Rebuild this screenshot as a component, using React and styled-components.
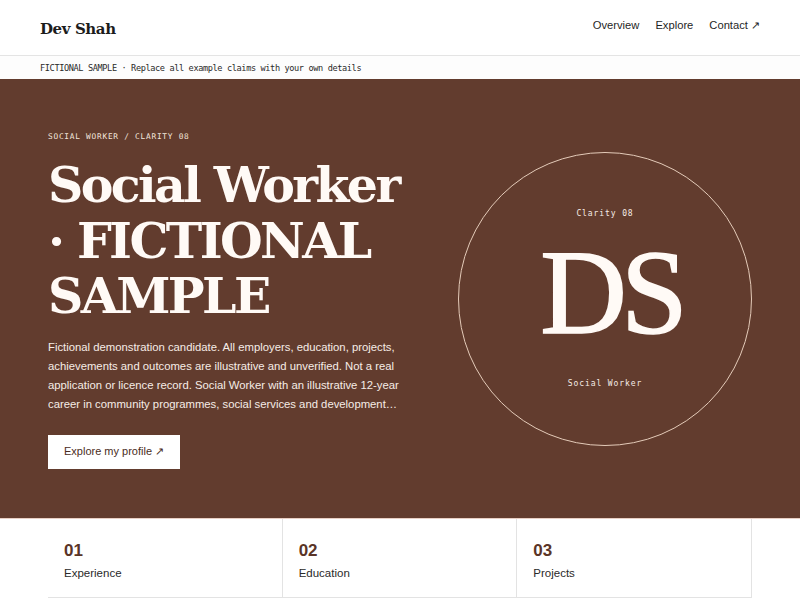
import React from 'react'
import styled, { createGlobalStyle } from 'styled-components'

const Global = createGlobalStyle`
  * { box-sizing: border-box; }
  body {
    margin: 0;
    background: #ffffff;
    font-family: "Liberation Sans", Arial, sans-serif;
    color: #1f1f1f;
  }
`

const Header = styled.header`
  height: 56px;
  display: flex;
  align-items: center;
  justify-content: space-between;
  padding: 0 40px;
  border-bottom: 1px solid #e4e4e4;
`

const Logo = styled.div`
  font-family: "DejaVu Serif", Georgia, serif;
  font-weight: 700;
  font-size: 15px;
  letter-spacing: -0.4px;
  color: #1c1c1c;
  margin-top: 2px;
`

const Nav = styled.nav`
  display: flex;
  gap: 16px;
  margin-top: -4px;
  a {
    font-size: 11.2px;
    color: #1f1f1f;
    text-decoration: none;
  }
`

const Strip = styled.div`
  height: 23px;
  display: flex;
  align-items: center;
  padding: 0 40px;
  font-family: "DejaVu Sans Mono", "Liberation Mono", monospace;
  font-size: 8.6px;
  letter-spacing: -0.38px;
  color: #2a2a2a;
  background: #fdfdfd;
`

const Hero = styled.section`
  background: #623c2e;
  height: 440px;
  display: grid;
  grid-template-columns: 1fr 294px;
  align-items: center;
  gap: 40px;
  padding: 0 48px;
  border-bottom: 1px solid #e9cfc4;
`

const Intro = styled.div`
  display: flex;
  flex-direction: column;
  align-items: flex-start;
  padding-top: 4px;
`

const Eyebrow = styled.div`
  font-family: "DejaVu Sans Mono", "Liberation Mono", monospace;
  font-size: 7.8px;
  letter-spacing: 0.75px;
  color: #f3e6dd;
  margin-bottom: 17px;
`

const Title = styled.h1`
  margin: 0;
  font-family: "DejaVu Serif", Georgia, serif;
  font-weight: 700;
  font-size: 49px;
  line-height: 55.5px;
  letter-spacing: -2.6px;
  color: #fffaf6;
`

const Lead = styled.p`
  margin: 13px 0 0;
  max-width: 362px;
  font-size: 11.3px;
  line-height: 19px;
  color: #f6ece6;
  display: -webkit-box;
  -webkit-line-clamp: 4;
  -webkit-box-orient: vertical;
  overflow: hidden;
`

const Button = styled.a`
  margin-top: 21px;
  display: inline-flex;
  align-items: center;
  height: 34px;
  padding: 0 16px;
  background: #ffffff;
  color: #4a2c22;
  font-size: 11px;
  text-decoration: none;
`

const Circle = styled.div`
  width: 294px;
  height: 294px;
  border-radius: 50%;
  border: 1px solid #e4cbb9;
  display: flex;
  flex-direction: column;
  align-items: center;
  justify-content: center;
  color: #fffaf6;
`

const Tag = styled.div`
  font-family: "DejaVu Sans Mono", "Liberation Mono", monospace;
  font-size: 8px;
  letter-spacing: 0.9px;
  color: #f6ece6;
`

const Initials = styled.div`
  font-family: "Liberation Serif", "Times New Roman", serif;
  font-size: 120px;
  line-height: 118px;
  letter-spacing: -6px;
  -webkit-text-stroke: 1.6px #fffaf6;
  margin: 16px 0 27px;
  padding-left: 12px;
`

const Stats = styled.section`
  display: grid;
  grid-template-columns: repeat(3, 1fr);
  margin: 0 48px;
`

const Stat = styled.div`
  height: 79px;
  padding: 22px 16px 0;
  border-right: 1px solid #e3e3e3;
  border-bottom: 1px solid #e3e3e3;
`

const Num = styled.div`
  font-size: 17px;
  font-weight: 700;
  color: #5a3427;
`

const Label = styled.div`
  margin-top: 6px;
  font-size: 11.5px;
  color: #2a2a2a;
`

const stats = [
  ['01', 'Experience'],
  ['02', 'Education'],
  ['03', 'Projects'],
]

export default function App() {
  return (
    <>
      <Global />
      <Header>
        <Logo>Dev Shah</Logo>
        <Nav>
          <a href="#overview">Overview</a>
          <a href="#explore">Explore</a>
          <a href="#contact">Contact ↗</a>
        </Nav>
      </Header>
      <Strip>FICTIONAL SAMPLE · Replace all example claims with your own details</Strip>
      <Hero>
        <Intro>
          <Eyebrow>SOCIAL WORKER / CLARITY 08</Eyebrow>
          <Title>Social Worker · FICTIONAL SAMPLE</Title>
          <Lead>
            Fictional demonstration candidate. All employers, education, projects,
            achievements and outcomes are illustrative and unverified. Not a real
            application or licence record. Social Worker with an illustrative 12-year
            career in community programmes, social services and development work.
          </Lead>
          <Button href="#profile">Explore my profile ↗</Button>
        </Intro>
        <Circle>
          <Tag>Clarity 08</Tag>
          <Initials>DS</Initials>
          <Tag>Social Worker</Tag>
        </Circle>
      </Hero>
      <Stats>
        {stats.map(([n, l]) => (
          <Stat key={n}>
            <Num>{n}</Num>
            <Label>{l}</Label>
          </Stat>
        ))}
      </Stats>
    </>
  )
}
